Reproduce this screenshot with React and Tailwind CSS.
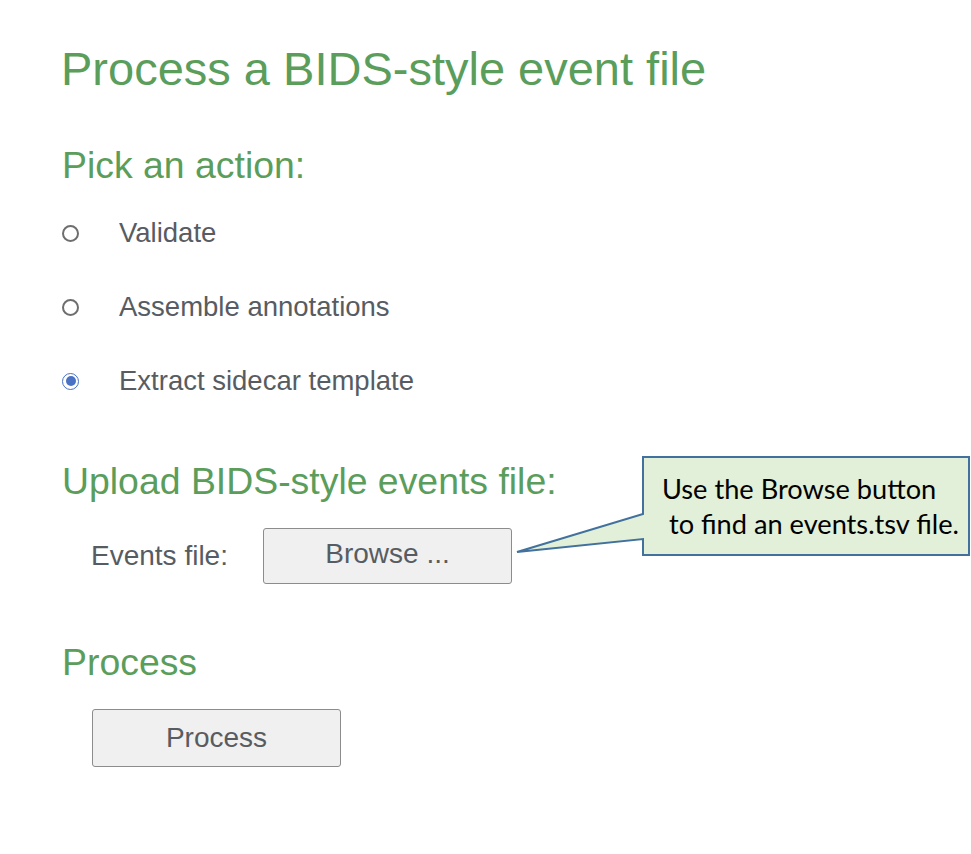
import React from "react";

function Radio({ checked, label }) {
  return (
    <div className="flex items-center h-[28px]">
      {checked ? (
        <span className="w-[17px] h-[17px] rounded-full border-[1.5px] border-[#4a72c4] flex items-center justify-center bg-white">
          <span className="w-[10px] h-[10px] rounded-full bg-[#4a72c4]" />
        </span>
      ) : (
        <span className="w-[17px] h-[17px] rounded-full border-2 border-[#6e6e6e] bg-white" />
      )}
      <span className="ml-[40px] text-[27.5px] leading-[28px] text-[#575c62]">{label}</span>
    </div>
  );
}

export default function App() {
  return (
    <div
      className="relative w-[971px] h-[854px] bg-white overflow-hidden"
      style={{ fontFamily: '"Liberation Sans", Arial, sans-serif' }}
    >
      <div className="flex flex-col pl-[61px] pt-[45px]">
        <h1 className="text-[47px] leading-[47px] text-[#5b9d5b] font-normal">
          Process a BIDS-style event file
        </h1>
        <h2 className="mt-[54px] pl-[1px] text-[37.4px] leading-[38px] text-[#5b9d5b] font-normal">
          Pick an action:
        </h2>
        <div className="mt-[35px] pl-[1px] flex flex-col gap-[46px]">
          <Radio label="Validate" />
          <Radio label="Assemble annotations" />
          <Radio checked label="Extract sidecar template" />
        </div>
        <h2 className="mt-[67px] pl-[1px] text-[37.4px] leading-[38px] text-[#5b9d5b] font-normal">
          Upload BIDS-style events file:
        </h2>
        <div className="mt-[28px] pl-[30px] flex items-center">
          <span className="text-[28px] leading-[28px] text-[#575c62] w-[172px]">Events file:</span>
          <button className="w-[249px] h-[56px] bg-[#f0f0f0] border border-[#8c8c8c] rounded-[3px] text-[28px] leading-[28px] text-[#575c62] flex items-center justify-center pb-[4px]">
            Browse ...
          </button>
        </div>
        <h2 className="mt-[59px] pl-[1px] text-[37.4px] leading-[38px] text-[#5b9d5b] font-normal">
          Process
        </h2>
        <div className="mt-[28px] pl-[31px]">
          <button className="w-[249px] h-[58px] bg-[#f0f0f0] border border-[#8c8c8c] rounded-[3px] text-[28px] leading-[28px] text-[#575c62] flex items-center justify-center">
            Process
          </button>
        </div>
      </div>

      {/* Callout */}
      <svg
        className="absolute left-0 top-0 pointer-events-none"
        width="971"
        height="854"
        viewBox="0 0 971 854"
      >
        <path
          d="M643 457 L969 457 L969 555 L643 555 L643 539 L517 552 L643 514 Z"
          fill="#e2efd9"
          stroke="#41719c"
          strokeWidth="2"
          strokeLinejoin="miter"
        />
      </svg>
      <div
        className="absolute left-[662px] top-[471px] text-[27.2px] leading-[35px] text-black whitespace-pre"
        style={{ fontFamily: 'Lato, "Noto Sans", sans-serif' }}
      >
        <div>Use the Browse button</div>
        <div> to find an events.tsv file.</div>
      </div>
    </div>
  );
}
